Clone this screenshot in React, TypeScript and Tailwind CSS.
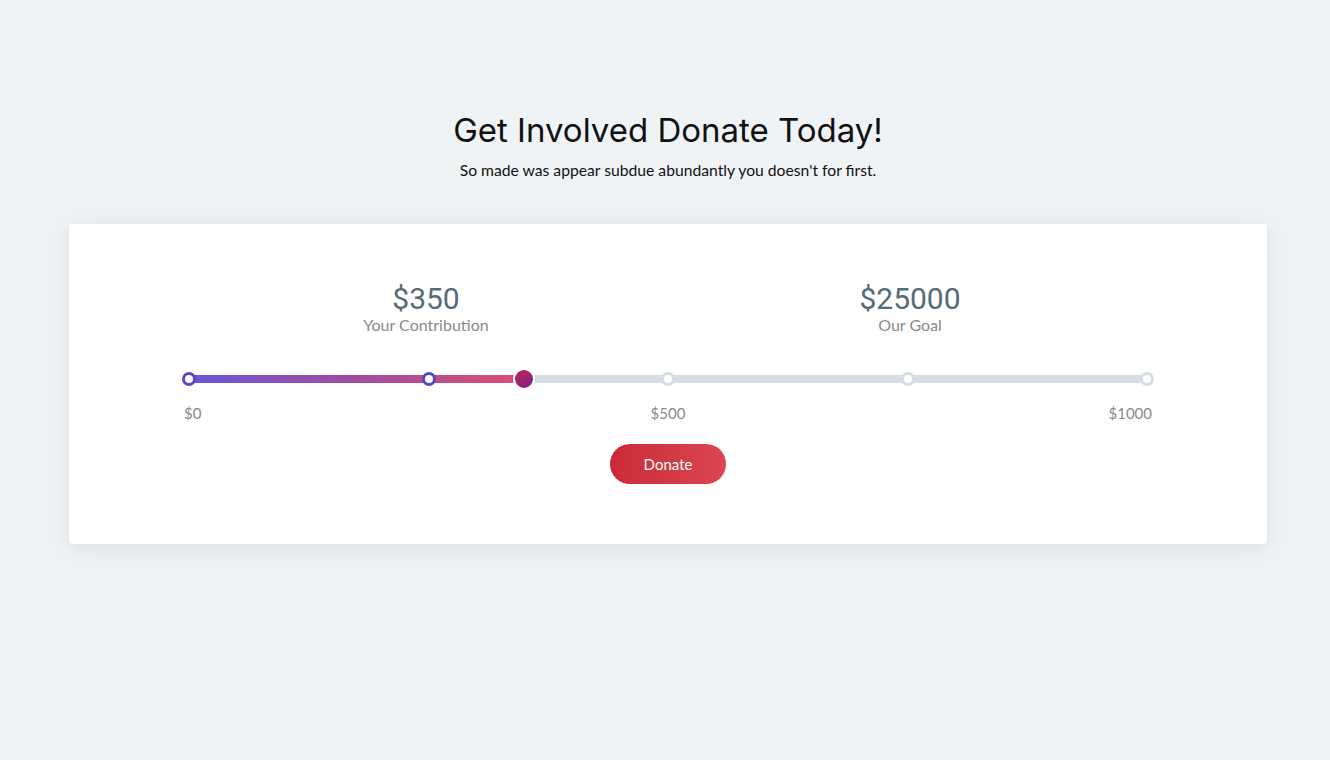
import React from 'react';

const ticks = [0, 25, 50, 75, 100];
const value = 35;

export default function App() {
  return (
    <div className="min-h-[760px] bg-[#f0f3f6] pt-[108px] font-['Lato',sans-serif]">
      {/* Header */}
      <div className="ml-[69px] w-[1198px] text-center">
        <h1 className="font-['Inter',sans-serif] text-[33px] leading-[44px] font-normal text-[#111]">
          Get Involved Donate Today!
        </h1>
        <p className="mt-[6px] text-[15.7px] leading-6 text-[#111]">
          So made was appear subdue abundantly you doesn't for first.
        </p>
      </div>

      {/* Card */}
      <div className="ml-[69px] mt-[42px] w-[1198px] rounded bg-white pt-[59px] pb-[60px] shadow-[0_4px_24px_rgba(60,80,110,0.12)]">
        <div className="mx-auto w-[968px]">
          <div className="grid grid-cols-2 text-center">
            <div>
              <div className="font-['Roboto',sans-serif] text-[30px] leading-[32px] text-[#566b78]">$350</div>
              <div className="text-[16px] leading-5 text-[#8a8a8a]">Your Contribution</div>
            </div>
            <div>
              <div className="font-['Roboto',sans-serif] text-[30px] leading-[32px] text-[#566b78]">$25000</div>
              <div className="text-[16px] leading-5 text-[#8a8a8a]">Our Goal</div>
            </div>
          </div>

          {/* Slider */}
          <div className="mt-[40px] px-[5px]">
            <div className="relative h-[8px] rounded-full bg-[#d5dee6]">
              <div
                className="absolute left-0 top-0 h-full rounded-full bg-gradient-to-r from-[#6a55d6] via-[#a24ba0] to-[#dc4c72]"
                style={{ width: `${value}%` }}
              />
              {ticks.map((t) => (
                <div
                  key={t}
                  className={`absolute top-1/2 h-[14px] w-[14px] -translate-x-1/2 -translate-y-1/2 rounded-full border-[3px] bg-white ${
                    t <= value ? 'border-[#5a48c0]' : 'border-[#d5dee6]'
                  }`}
                  style={{ left: `${t}%` }}
                />
              ))}
              <div
                className="absolute top-1/2 h-[22px] w-[22px] -translate-x-1/2 -translate-y-1/2 rounded-full border-2 border-white bg-gradient-to-br from-[#c01e4a] to-[#7a1a8c]"
                style={{ left: `${value}%` }}
              />
            </div>
          </div>

          <div className="mt-[20px] grid grid-cols-3 text-[15px] leading-5 text-[#8a8a8a]">
            <span className="text-left">$0</span>
            <span className="text-center">$500</span>
            <span className="text-right">$1000</span>
          </div>

          <div className="mt-[21px] flex justify-center">
            <button className="h-[40px] w-[116px] rounded-full bg-gradient-to-r from-[#c92b36] to-[#db4651] text-[15px] text-white">
              Donate
            </button>
          </div>
        </div>
      </div>
    </div>
  );
}
